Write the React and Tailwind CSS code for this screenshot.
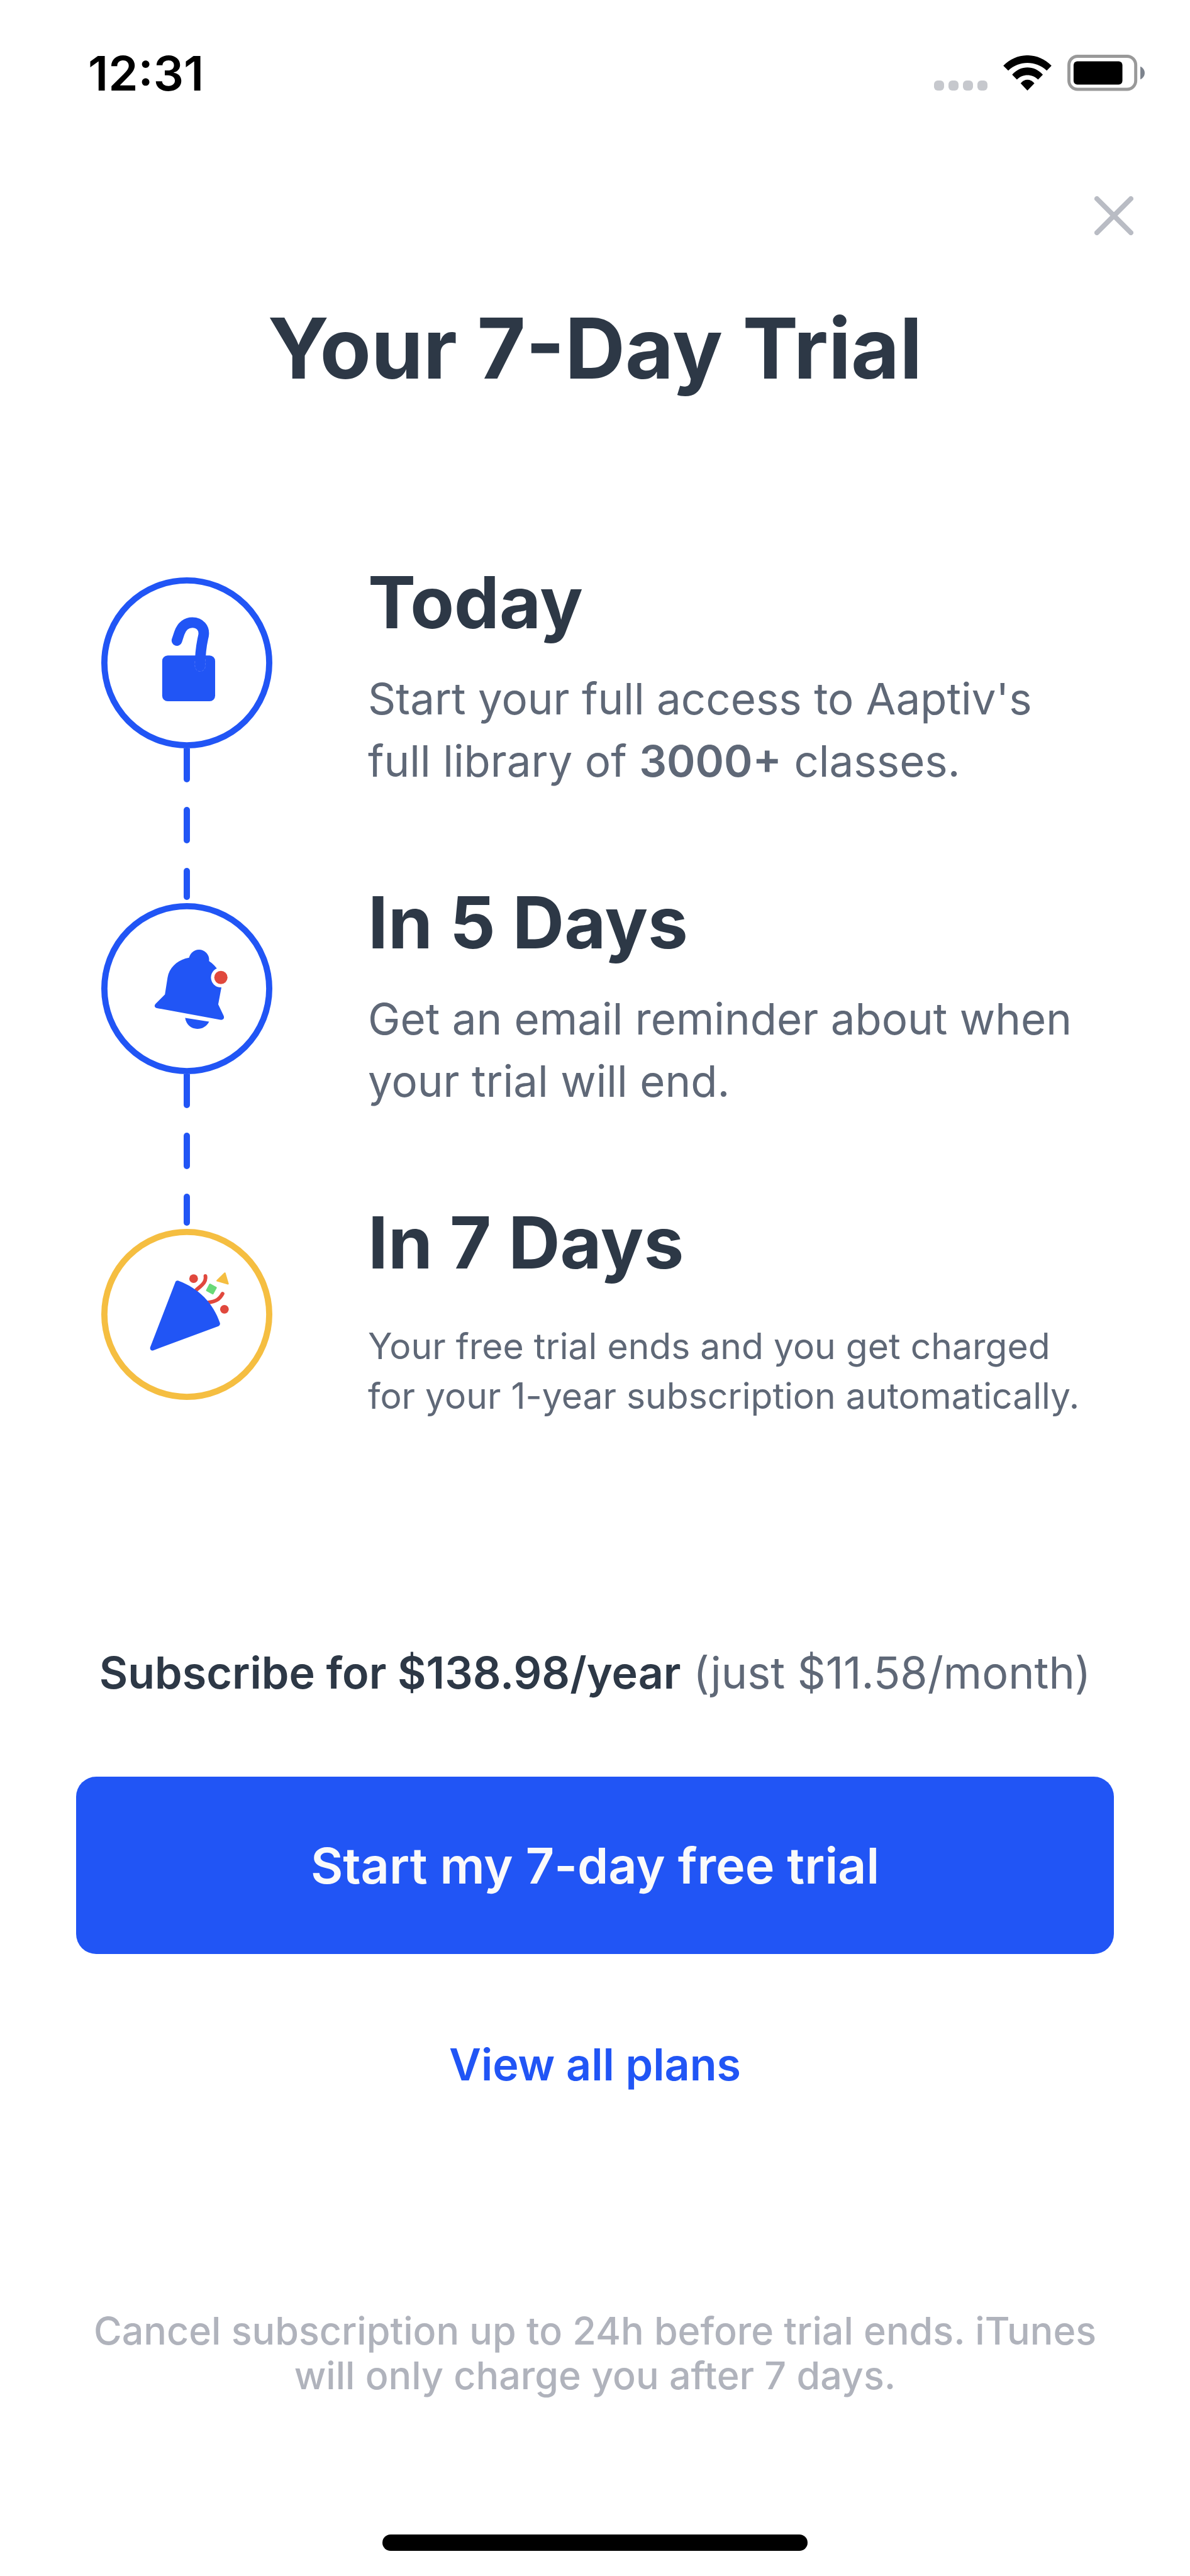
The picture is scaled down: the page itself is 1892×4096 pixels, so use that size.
import React from "react";

const BLUE = "#2155f5";
const RED = "#e0483d";
const YELLOW = "#f5be41";

const StatusBar = () => {
  return (
    <header className="flex items-center justify-between pt-[76px] pl-[140px] pr-[72px] text-black">
      <span className="text-[76px] leading-[80px] font-semibold">12:31</span>
      <div className="flex items-center gap-[25px]">
        {/* no signal */}
        <div className="flex h-[56px] items-end gap-[7px]">
          {[0, 1, 2, 3].map((dot) => (
            <span key={dot} className="size-[16px] rounded-[6px] bg-[#c6c8cd]" />
          ))}
        </div>
        <svg viewBox="0 0 78 57" className="h-[56px] w-[77px]" fill="#000">
          <path d="M0 16.7C22-5.6 56-5.6 78 16.7L70.3 24.7C52 8.2 26 8.2 8 24.7Z" />
          <path d="M14.3 31.4C28 15.8 50 15.8 64 31.4L56.3 39.3C47 29.6 31 29.6 22 39.3Z" />
          <path d="M28 45.4C34 37.3 44 37.3 50.3 45.4L39 57Z" />
        </svg>
        <svg viewBox="0 0 125 59" className="h-[58px] w-[123px]">
          <rect
            x="2.5"
            y="2.5"
            width="108"
            height="53.5"
            rx="14"
            fill="none"
            stroke="#999"
            strokeWidth="5"
          />
          <rect x="10" y="10.7" width="79" height="37.5" rx="6" fill="#000" />
          <path d="M118 19C122.500 21 125 25 125 29.500C125 34 122.500 38 118 40Z" fill="#7d838d" />
        </svg>
      </div>
    </header>
  );
};

const LockIcon = () => (
  <>
    <rect x="98.300" y="126" width="85.400" height="74" rx="9" fill={BLUE} />
    <path
      d="M122 102L126 90C130 78 138 73 147 73C159 73 167 82 165 94C163 103 159.500 115 159.500 143"
      fill="none"
      stroke={BLUE}
      strokeWidth="17"
      strokeLinecap="round"
    />
    <path
      d="M151 135V142C151 155 168 155 168 142V131"
      fill="none"
      stroke="#4770f7"
      strokeWidth="1"
      strokeDasharray="4 2"
    />
  </>
);

const BellIcon = () => (
  <>
    <circle cx="157.700" cy="91.500" r="16.300" fill={BLUE} />
    <path
      d="M141.700 88C124 91 110 103 107 120L102.700 147.300L88 162C84.500 166 86 169 91 169.700L192 188.300C197 189 199 186 197.500 182L188.700 163.300L194 135C196 118 188 103 174 93.700Z"
      fill={BLUE}
    />
    <path
      d="M135.300 185.300L174 191.300C170 199 163 203 155 203C145 203 137 196 135.300 185.300Z"
      fill={BLUE}
    />
    <circle cx="193" cy="120" r="16" fill="#fff" />
    <circle cx="193" cy="120" r="10.700" fill={RED} />
  </>
);

const PartyIcon = () => (
  <>
    <g fill="none" stroke={RED} strokeWidth="6" strokeLinecap="round">
      <path d="M168 76C169.500 86 163 90 153 99" />
      <path d="M195.700 104.500C190 115 184 117 172 119" />
    </g>
    <path
      d="M119.500 86C120.500 83.500 123 83 125 84C157 96 181 120 191.500 152C192 154 191 156 189 157L84 196C81 197 78 195 79 191Z"
      fill={BLUE}
    />
    <circle cx="149" cy="80.300" r="7" fill={RED} />
    <circle cx="198.700" cy="129.700" r="7" fill={RED} />
    <rect
      x="170.900"
      y="90.200"
      width="13.600"
      height="13.600"
      rx="1.500"
      fill="#69d977"
      transform="rotate(28 177.700 97)"
    />
    <path
      d="M199.400 71.500L204.400 88.500L187 83.500Z"
      fill={YELLOW}
      stroke={YELLOW}
      strokeWidth="2.500"
      strokeLinejoin="round"
    />
  </>
);

const StepCircle = ({ color, children }) => (
  <svg viewBox="0 0 276 276" className="block size-[272px]">
    <circle cx="138" cy="138" r="133" fill="none" stroke={color} strokeWidth="10" />
    {children}
  </svg>
);

// Dashed line between two circles
const Connector = () => (
  <div className="flex h-[246px] flex-col items-center justify-between pb-[5px]">
    <span className="h-[54px] w-[10px] rounded-b-full bg-[#2155f5]" />
    <span className="h-[58px] w-[10px] rounded-full bg-[#2155f5]" />
    <span className="h-[51px] w-[10px] rounded-full bg-[#2155f5]" />
  </div>
);

const StepTitle = ({ children }) => (
  <h2 className="text-[114px] leading-[140px] font-bold text-[#2d3846]">
    {children}
  </h2>
);

const App = () => {
  return (
    <main className="flex min-h-screen flex-col bg-white font-['Inter',sans-serif] text-[#5f6877]">
      <StatusBar />

      <div className="flex justify-end pt-[156px] pr-[90px]">
        <button type="button" aria-label="Close">
          <svg viewBox="0 0 62 62" className="block size-[62px]">
            <path
              d="M4 4L58 58M58 4L4 58"
              stroke="#b9bcc4"
              strokeWidth="8"
              strokeLinecap="round"
            />
          </svg>
        </button>
      </div>

      <h1 className="mt-[100px] text-center text-[133px] leading-[160px] font-bold text-[#2d3846]">
        Your 7-Day Trial
      </h1>

      <section className="mt-[254px] flex items-start pl-[161px]">
        <div className="mt-[30px] w-[272px] shrink-0">
          <StepCircle color={BLUE}>
            <LockIcon />
          </StepCircle>
          <Connector />
          <StepCircle color={BLUE}>
            <BellIcon />
          </StepCircle>
          <Connector />
          <StepCircle color={YELLOW}>
            <PartyIcon />
          </StepCircle>
        </div>

        <div className="ml-[152px] whitespace-nowrap">
          <StepTitle>Today</StepTitle>
          <p className="mt-[34px] text-[69px] leading-[99px]">
            Start your full access to Aaptiv's
            <br />
            full library of <b className="font-semibold">3000+</b> classes.
          </p>

          <div className="mt-[137px]">
            <StepTitle>In 5 Days</StepTitle>
            <p className="mt-[34px] text-[69px] leading-[99px]">
              Get an email reminder about when
              <br />
              your trial will end.
            </p>
          </div>

          <div className="mt-[137px]">
            <StepTitle>In 7 Days</StepTitle>
            <p className="mt-[55px] text-[57px] leading-[79px]">
              Your free trial ends and you get charged
              <br />
              for your 1-year subscription automatically.
            </p>
          </div>
        </div>
      </section>

      <section className="mt-[356px] flex flex-col items-center px-[121px]">
        <p className="text-[70px] leading-[90px] whitespace-nowrap">
          <b className="font-semibold text-[#2d3846]">
            Subscribe for $138.98/year
          </b>{" "}
          (just $11.58/month)
        </p>
        <button
          type="button"
          className="mt-[120px] h-[282px] w-full rounded-[32px] bg-[#2155f5] text-[79px] font-semibold text-[#fafafa]"
        >
          Start my 7-day free trial
        </button>
        <a
          href="#plans"
          className="mt-[131px] text-[70px] leading-[90px] font-semibold text-[#2155f5]"
        >
          View all plans
        </a>
      </section>

      <footer className="mt-[343px] flex flex-col items-center pb-[40px]">
        <p className="text-center text-[61px] leading-[71px] font-medium whitespace-nowrap text-[#b0b3bc]">
          Cancel subscription up to 24h before trial ends. iTunes
          <br />
          will only charge you after 7 days.
        </p>
        <div className="mt-[217px] h-[26px] w-[676px] rounded-full bg-black" />
      </footer>
    </main>
  );
};

export default App;
